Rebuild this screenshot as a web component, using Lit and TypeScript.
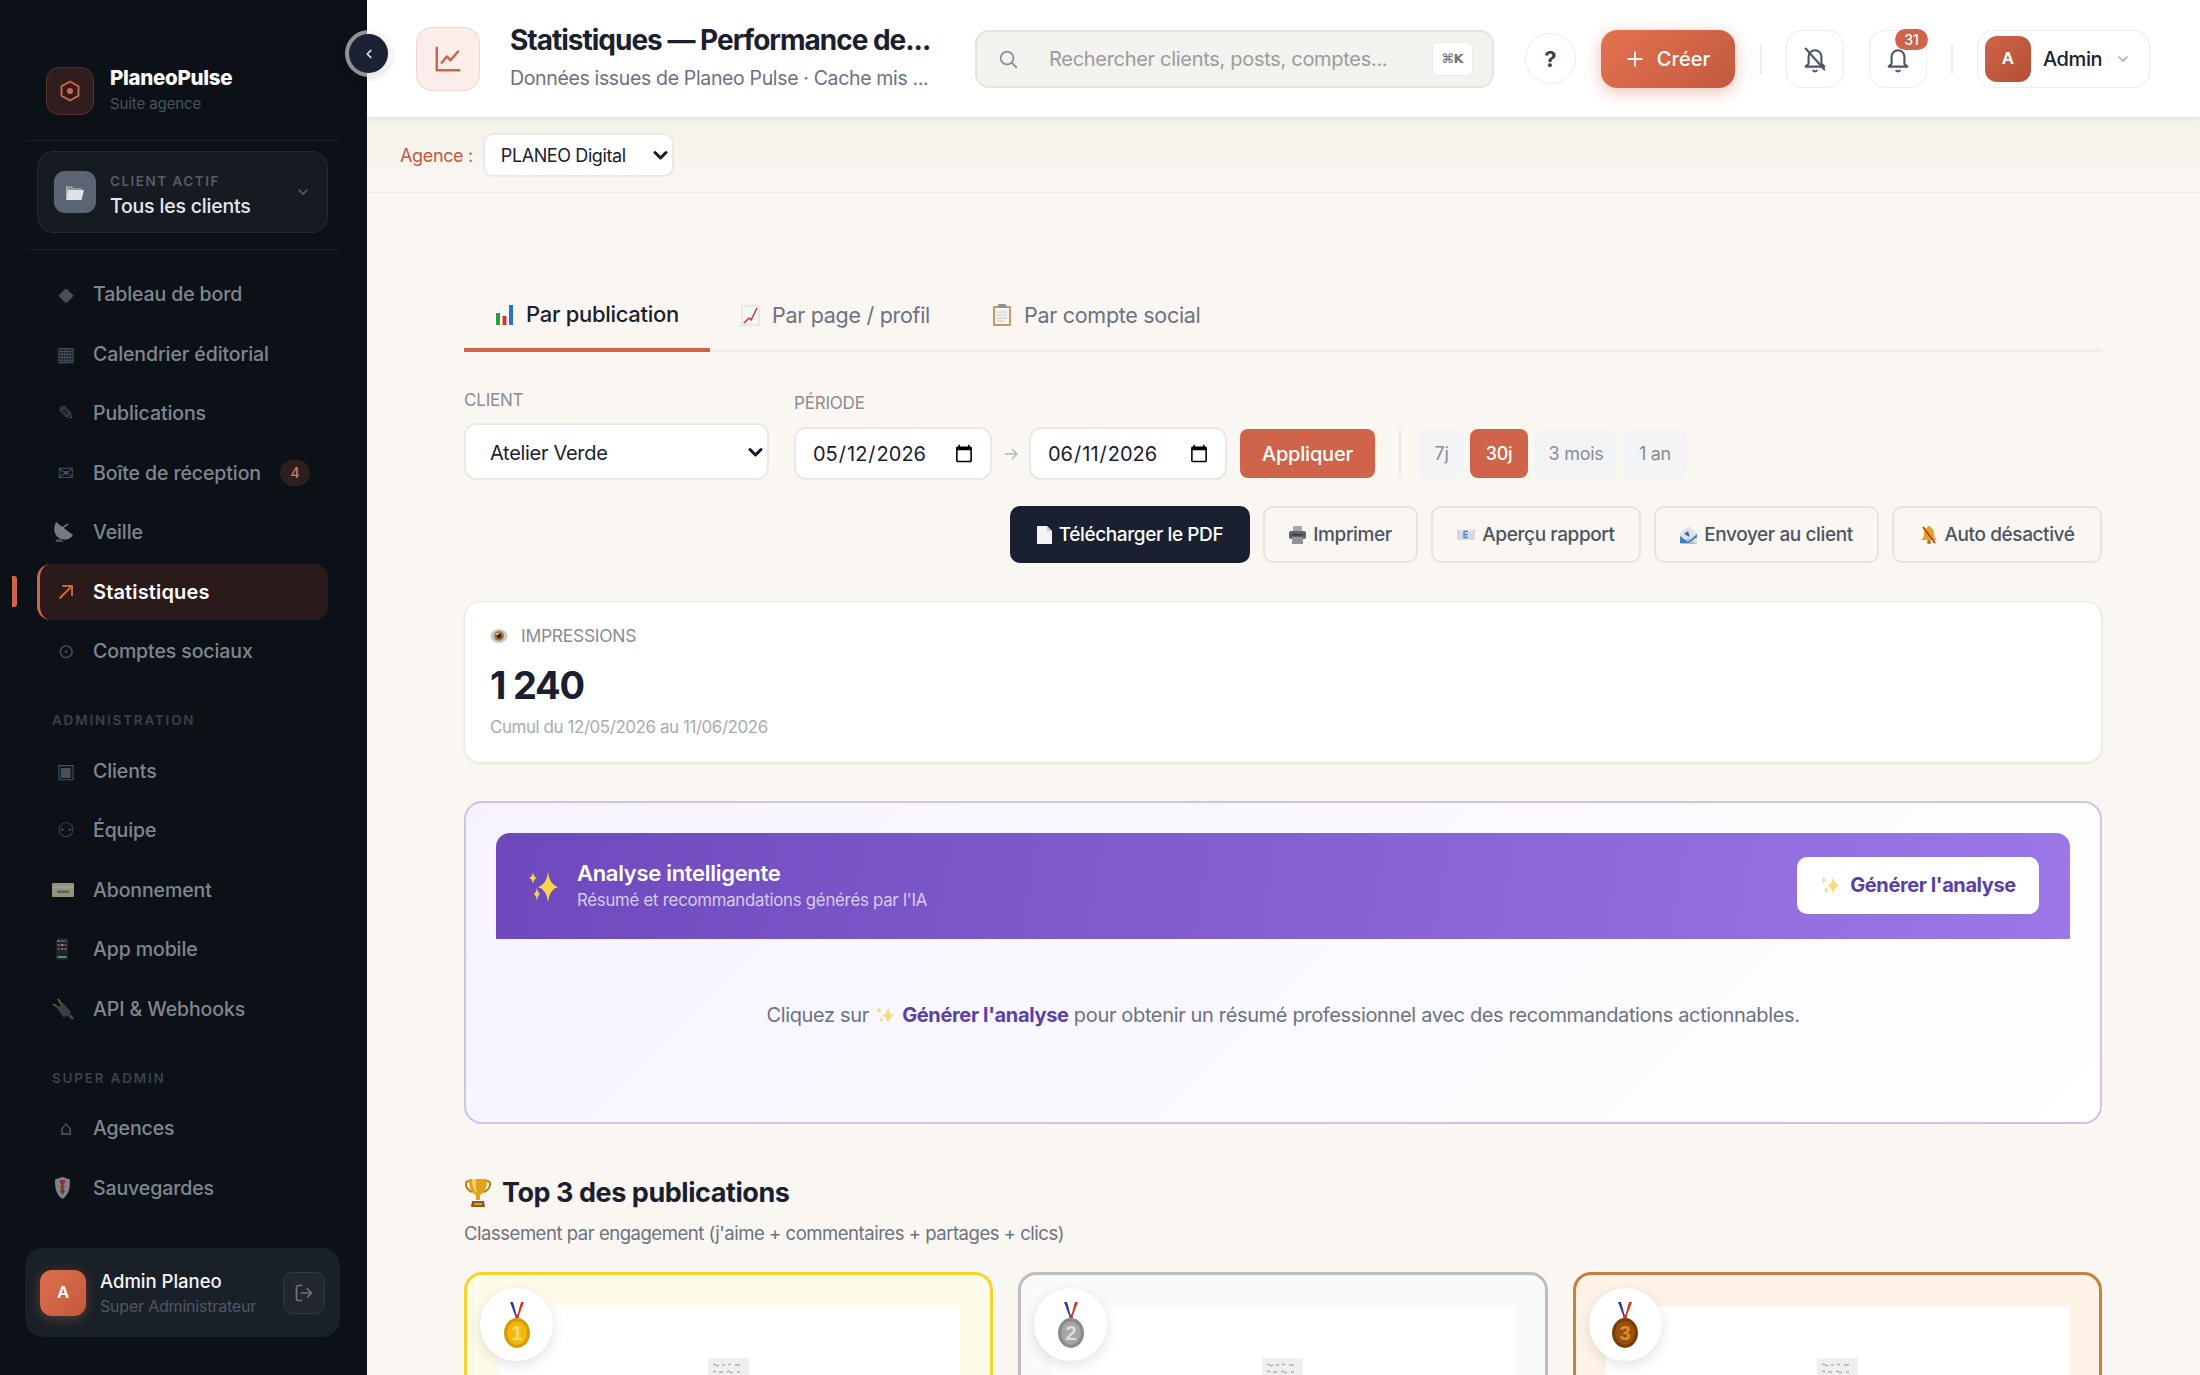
import { LitElement, html, css, svg } from "lit";
import { customElement } from "lit/decorators.js";

const chev = html`<svg width="16" height="16" viewBox="0 0 24 24" fill="none" stroke="currentColor" stroke-width="2" stroke-linecap="round" stroke-linejoin="round"><path d="M6 9l6 6 6-6"/></svg>`;
const selChev = html`<svg class="sc" width="15" height="10" viewBox="0 0 15 10" fill="none" stroke="#111827" stroke-width="3" stroke-linecap="round" stroke-linejoin="round"><path d="M2 2.500l5.500 5.500 5.500-5.500"/></svg>`;
const bellPath = svg`<path d="M6.500 16V10a5.500 5.500 0 0 1 11 0v6l2.500 2.500H4z" /><path d="M10.500 22a2 2 0 0 0 3 0"/>`;

const dish = html`<svg width="22" height="22" viewBox="0 0 22 22"><path d="M4 1l17 13c-3 5-9 6-14 3C2 14 1 7 4 1z" fill="#b4bac2"/><path d="M9 8l7-5" stroke="#d5d9de" stroke-width="1.200"/><path d="M5 18l4 0 3 3H3z" fill="#6b6f75"/></svg>`;
const card = html`<svg width="22" height="22" viewBox="0 0 22 22"><rect x="0" y="4" width="22" height="14" rx="1" fill="#e7e1b8"/><rect x="0" y="7" width="22" height="2.500" fill="#f5f1d4"/><rect x="5" y="11.500" width="12" height="2.500" fill="#8a9a78"/></svg>`;
const phone = html`<svg width="22" height="22" viewBox="0 0 22 22"><rect x="4" y="0" width="12" height="22" rx="2" fill="#2b2f33"/><g><rect x="5.500" y="2" width="2.500" height="2" fill="#e8a04a"/><rect x="9" y="2" width="2.500" height="2" fill="#5fb0e8"/><rect x="12.500" y="2" width="2" height="2" fill="#d85a5a"/><rect x="5.500" y="6" width="2.500" height="2" fill="#62c46a"/><rect x="9" y="6" width="2.500" height="2" fill="#e8d85a"/><rect x="12.500" y="6" width="2" height="2" fill="#b06ad8"/><rect x="5.500" y="10" width="2.500" height="2" fill="#d85a5a"/><rect x="9" y="10" width="2.500" height="2" fill="#5fb0e8"/><rect x="12.500" y="10" width="2" height="2" fill="#e8a04a"/><rect x="5.500" y="18" width="9" height="2" fill="#7fd0c8"/></g></svg>`;
const plug = html`<svg width="22" height="22" viewBox="0 0 22 22"><path d="M1 6l6 4M6 1l4 6" stroke="#b9a94e" stroke-width="1.500"/><path d="M5 10l6-5 8 9-3 4-5 1z" fill="#585b60"/><path d="M17 17l4 4" stroke="#6b6e73" stroke-width="2.500"/></svg>`;
const shield = html`<svg width="22" height="22" viewBox="0 0 22 22"><path d="M3 2.500L10.500 0 18 2.500c0 9-1 15-7.500 19.500C4 17.500 3 11.500 3 2.500z" fill="#c4c8cc"/><path d="M8 3h5v3l-2 2 2 2-2 2 2 2-2.500 4L8 14l1.500-2L8 10l1.500-2L8 6z" fill="#d2493f"/></svg>`;
const folder = html`<svg width="20" height="18" viewBox="0 0 20 18"><path d="M1 3h6l2 2h8v3H1z" fill="#8d96a2"/><path d="M3 7h16l-2.500 10H1z" fill="#dfe3e6"/><path d="M1 3v14l2-10" fill="#b3b9c1"/></svg>`;

const bars = html`<svg width="19" height="21" viewBox="0 0 19 21"><rect x="1" y="9" width="4" height="12" fill="#2f9e44"/><rect x="7.500" y="12" width="4" height="9" fill="#d8352a"/><rect x="14" y="1" width="4" height="20" fill="#2b6fd0"/></svg>`;
const chartUp = html`<svg width="19" height="21" viewBox="0 0 19 21"><rect x="1" y="1" width="17" height="19" fill="#f6f7f9" stroke="#d5d9df"/><path d="M3 18l5-5 2 2 6-12" fill="none" stroke="#d8352a" stroke-width="1.500"/></svg>`;
const clip = html`<svg width="20" height="22" viewBox="0 0 20 22"><rect x="1" y="2" width="18" height="20" rx="1" fill="#c49a62"/><rect x="3" y="4" width="14" height="16" fill="#f3f3f0"/><rect x="6" y="0" width="8" height="4" rx="1" fill="#8d9299"/><path d="M5 8h10M5 11h10M5 14h10M5 17h7" stroke="#c9ccd1" stroke-width="1"/></svg>`;
const page = html`<svg width="15" height="18" viewBox="0 0 15 18"><path d="M0 0h10l5 5v13H0z" fill="#f3f3f3"/><path d="M10 0v5h5z" fill="#c9ccd1"/></svg>`;
const printer = html`<svg width="17" height="18" viewBox="0 0 17 18"><rect x="4" y="0" width="9" height="6" rx="1" fill="#a3a7ad"/><rect x="0" y="5" width="17" height="8" rx="2" fill="#60646b"/><rect x="3" y="11" width="11" height="7" fill="#8f9399"/><rect x="3" y="8" width="11" height="1.500" fill="#35383d"/></svg>`;
const mailE = html`<svg width="18" height="11" viewBox="0 0 18 11"><rect width="18" height="11" fill="#d3dae6"/><path d="M0 0l9 5 9-5" fill="#e7ebf2"/><path d="M11 2.500H7v6h4M7 5.500h3.500" fill="none" stroke="#3f7fd0" stroke-width="1.300"/></svg>`;
const mailIn = html`<svg width="17" height="18" viewBox="0 0 17 18"><path d="M0 7l8.500-7L17 7v11H0z" fill="#dfe3e8"/><path d="M8 5l2 6-6-3" fill="#2b6fb0"/><path d="M0 18l8.500-6 8.500 6z" fill="#b9c0c9"/><path d="M0 10l8 6 9-8v3l-8 6H0z" fill="#3f7fbe"/></svg>`;
const bellX = html`<svg width="18" height="18" viewBox="0 0 18 18"><path d="M9 0a2 2 0 0 1 2 2c3 1 3 4 3 7 0 2 2 4 3 5H1c1-1 3-3 3-5 0-3 0-6 3-7a2 2 0 0 1 2-2z" fill="#e0a526"/><circle cx="9" cy="16" r="2" fill="#a8741a"/><path d="M3 1l12 16" stroke="#d8352a" stroke-width="2"/></svg>`;
const eye = html`<svg width="18" height="16" viewBox="0 0 18 16"><ellipse cx="9" cy="8" rx="8.500" ry="7" fill="#c9cbce"/><circle cx="9" cy="8" r="5" fill="#a77a3a"/><circle cx="9" cy="8" r="2.500" fill="#3a2616"/><circle cx="7.500" cy="6" r="1" fill="#fff"/></svg>`;
const star = (x: number, y: number, rx: number, ry: number) =>
  svg`<path d="M${x} ${y - ry}Q${x + rx * 0.15} ${y - ry * 0.15} ${x + rx} ${y}Q${x + rx * 0.15} ${y + ry * 0.15} ${x} ${y + ry}Q${x - rx * 0.15} ${y + ry * 0.15} ${x - rx} ${y}Q${x - rx * 0.15} ${y - ry * 0.15} ${x} ${y - ry}z"/>`;
const sparkles = (w: number, h: number, fill: string) =>
  html`<svg width="${w}" height="${h}" viewBox="0 0 30 32" fill="${fill}" style="flex:none">${star(20, 17, 10, 15)}${star(5, 8, 4, 6)}${star(9, 24, 3.5, 7)}</svg>`;
const trophy = html`<svg width="28" height="30" viewBox="0 0 28 30"><path d="M5 3C0 3 1 11 8 14" fill="none" stroke="#b97a10" stroke-width="2"/><path d="M23 3c5 0 4 8-3 11" fill="none" stroke="#b97a10" stroke-width="2"/><path d="M5 1h18c0 9-2 14-7 16v5h-4v-5C7 15 5 10 5 1z" fill="#e0a21c"/><path d="M8 1h4c-1 5 0 10 1 14-3-2-5-7-5-14z" fill="#f6d560"/><path d="M8 23h12l1 6H7z" fill="#8a5a20"/><rect x="10" y="25" width="8" height="2" fill="#e0a21c"/></svg>`;
const medal = (n: string, a: string, b: string, t: string) =>
  html`<svg width="32" height="46" viewBox="0 0 32 46"><path d="M9 0l6 16h3L12 0z" fill="#2b3a9e"/><path d="M23 0l-6 16h-3l6-16z" fill="#d8352a"/><path d="M13 0l3 12 3-12" fill="none" stroke="#fff" stroke-width="1.500"/><ellipse cx="16" cy="31" rx="13" ry="15" fill="${a}"/><ellipse cx="16" cy="31" rx="10" ry="11.500" fill="${b}"/><text x="16" y="38" text-anchor="middle" font-family="Liberation Sans, sans-serif" font-weight="700" font-size="20" fill="${t}">${n}</text></svg>`;
const paper = html`<svg width="41" height="60" viewBox="0 0 41 60"><rect width="41" height="60" fill="#efefef"/><g fill="none" stroke="#555" stroke-width=".6"><path d="M5 7q2-2 3 0t3 0M14 7h3M20 7q2-2 3 0M27 7h5M5 14q2-2 3 0M11 14h4M19 14q2-2 3 0t3 0M29 14h3M5 21h4M12 21q2-2 3 0M19 21h5M28 21h3"/></g><circle cx="37" cy="22" r="4" fill="#e0524a"/></svg>`;

type Item = { g?: string; svg?: any; t: string; badge?: string; active?: boolean };
const arrowNE = html`<svg width="16" height="16" viewBox="0 0 16 16" fill="none" stroke="#d0644a" stroke-width="2" stroke-linecap="round" stroke-linejoin="round"><path d="M2 14L14 2M5 2h9v9"/></svg>`;
const main: Item[] = [
  { g: "◆", t: "Tableau de bord" },
  { g: "▦", t: "Calendrier éditorial" },
  { g: "✎", t: "Publications" },
  { g: "✉", t: "Boîte de réception", badge: "4" },
  { svg: dish, t: "Veille" },
  { svg: arrowNE, t: "Statistiques", active: true },
  { g: "⊙", t: "Comptes sociaux" },
];
const admin: Item[] = [
  { g: "▣", t: "Clients" },
  { g: "⚇", t: "Équipe" },
  { svg: card, t: "Abonnement" },
  { svg: phone, t: "App mobile" },
  { svg: plug, t: "API & Webhooks" },
];
const sup: Item[] = [
  { g: "⌂", t: "Agences" },
  { svg: shield, t: "Sauvegardes" },
];

@customElement("app-root")
export class AppRoot extends LitElement {
  static styles = css`
    :host { display: block; width: 100%; height: 100vh; overflow: hidden; font-family: "Inter", "Noto Sans", sans-serif; color: #1a2030; }
    * { box-sizing: border-box; }
    .app { display: flex; height: 100vh; position: relative; }
    .side { width: 367px; flex: none; background: #0c1118; display: flex; flex-direction: column; padding: 0 27px 0 25px; letter-spacing: -0.1px; }
    .brand { display: flex; align-items: center; gap: 16px; height: 141px; padding: 41px 0 0 21px; border-bottom: 1px solid #1b2027; flex: none; }
    .logo { width: 48px; height: 48px; border-radius: 13px; background: #2f1e1d; border: 1px solid #5b2e26; display: flex; align-items: center; justify-content: center; color: #d9674a; }
    .brand b { display: block; font-size: 20.5px; font-weight: 800; color: #fff; letter-spacing: -0.3px; line-height: 24px; }
    .brand small { display: block; font-size: 15px; color: #4a515c; line-height: 24px; margin-top: 2px; }
    .client { margin: 10px 12px 16px; height: 82px; flex: none; border-radius: 16px; background: #161b22; border: 1px solid #262b33; display: flex; align-items: center; padding: 0 16px; gap: 14px; color: #5d6570; }
    .client .ci { width: 42px; height: 42px; border-radius: 11px; background: #5b6472; display: flex; align-items: center; justify-content: center; }
    .client .ct { flex: 1; padding-top: 8px; }
    .client small { display: block; font-size: 13.5px; font-weight: 600; letter-spacing: 1.5px; color: #555c67; line-height: 20px; }
    .client span.n { display: block; font-size: 19.5px; font-weight: 500; color: #e5e7eb; line-height: 30px; letter-spacing: -0.2px; }
    .nav { flex: 1; border-top: 1px solid #1b2027; padding: 16px 12px 0; min-height: 0; }
    .item { position: relative; display: flex; align-items: center; height: 56px; margin-bottom: 3.5px; border-radius: 14px; padding-left: 15px; color: #7f8691; font-size: 19.5px; font-weight: 500; }
    .ic { width: 28px; height: 28px; margin-right: 13px; display: flex; align-items: center; justify-content: center; font-size: 20px; line-height: 28px; color: #474e5a; flex: none; font-family: "DejaVu Sans", sans-serif; }
    .ic.em { justify-content: flex-start; opacity: .62; }
    .item.on { background: #2a1a19; color: #fff; font-weight: 600; border-left: 3px solid #d0644a; padding-left: 12px; font-size: 20px; letter-spacing: 0.15px; }
    .item.on .ic { opacity: 1; justify-content: center; }
    .item.on::before { content: ""; position: absolute; left: -28px; top: 12px; width: 5px; height: 31px; background: #d0644a; border-radius: 0 3px 3px 0; }
    .badge { margin-left: 19px; min-width: 30px; height: 26px; border-radius: 13px; background: #2e1f1d; color: #d9795f; font-size: 14px; display: flex; align-items: center; justify-content: center; }
    .sec { margin: 33px 0 14.500px 15px; height: 16px; line-height: 16px; font-size: 13.5px; font-weight: 600; letter-spacing: 1.8px; color: #3a414c; }
    .foot { flex: none; height: 89px; margin-bottom: 38px; border-radius: 18px; background: #1a2028; display: flex; align-items: center; padding: 0 15px; gap: 14px; }
    .foot .av { width: 46px; height: 46px; border-radius: 12px; background: linear-gradient(135deg, #df6f4e, #c25a3f); color: #fff; font-weight: 800; font-size: 17px; display: flex; align-items: center; justify-content: center; box-shadow: 0 2px 12px rgba(223,111,78,.35); font-family: "Liberation Sans", sans-serif; }
    .foot .ft { flex: 1; }
    .foot b { display: block; font-size: 18.5px; font-weight: 500; color: #f3f4f6; line-height: 26px; letter-spacing: 0; }
    .foot small { display: block; font-size: 16px; color: #4f5661; line-height: 24px; letter-spacing: -0.2px; }
    .out { width: 42px; height: 42px; border-radius: 10px; border: 1px solid #343a43; background: #22272f; color: #6b7280; display: flex; align-items: center; justify-content: center; }

    .toggle { position: absolute; left: 349px; top: 34px; width: 39px; height: 39px; border-radius: 50%; background: #1a2233; color: #e5e7eb; display: flex; align-items: center; justify-content: center; box-shadow: 0 0 0 4px rgba(255,255,255,.55), 0 2px 8px rgba(0,0,0,.35); z-index: 5; }

    .main { flex: 1; min-width: 0; display: flex; flex-direction: column; background: #faf7f2; }
    .top { flex: none; height: 117px; background: #fff; box-shadow: 0 1px 6px rgba(0,0,0,.09); display: flex; align-items: center; padding: 0 50px 0 49px; position: relative; z-index: 2; }
    .pi { width: 64px; height: 64px; flex: none; border-radius: 16px; background: #fbeeea; border: 1px solid #f3d5cd; color: #d0644a; display: flex; align-items: center; justify-content: center; margin-right: 30px; }
    .tt { width: 422px; flex: none; margin-right: 43px; padding-bottom: 3px; }
    .tt h1 { margin: 0; font-size: 28px; font-weight: 700; line-height: 34px; letter-spacing: -1px; white-space: nowrap; }
    .tt p { margin: 8px 0 0; font-size: 19.5px; color: #6b7280; line-height: 26px; letter-spacing: -0.35px; white-space: nowrap; }
    .search { width: 519px; height: 58px; flex: none; border-radius: 14px; background: #f3f2ee; border: 2px solid #e6e4de; display: flex; align-items: center; padding: 0 19px 0 20px; color: #8b8f96; font-size: 20px; letter-spacing: -0.3px; margin-right: 31px; }
    .search span { flex: 1; margin-left: 30px; color: #9a9c9f; }
    .search kbd { width: 41px; height: 34px; border-radius: 6px; background: #fff; border: 1px solid #eceae5; font: 600 13px "DejaVu Sans", sans-serif; color: #6b7280; display: flex; align-items: center; justify-content: center; }
    .help { width: 51px; height: 51px; flex: none; border-radius: 50%; border: 1px solid #ececec; font-size: 22px; font-weight: 700; color: #374151; display: flex; align-items: center; justify-content: center; margin-right: 25px; }
    .create { width: 134px; height: 58px; flex: none; border-radius: 16px; background: linear-gradient(135deg, #e4724f, #c25a3f); box-shadow: 0 4px 16px rgba(208,100,74,.4); color: #fff; font-size: 20px; font-weight: 500; display: flex; align-items: center; justify-content: center; gap: 13px; margin-right: 25px; }
    .vr { width: 2px; height: 30px; background: #eeeeee; flex: none; margin-right: 24px; }
    .ib { position: relative; width: 58px; height: 58px; flex: none; border-radius: 16px; border: 1px solid #ededed; color: #4b5563; display: flex; align-items: center; justify-content: center; margin-right: 25px; }
    .ib.l { margin-right: 24px; }
    .ib i { position: absolute; top: -2px; left: 25px; width: 33px; height: 21px; border-radius: 11px; background: #d0644a; color: #fff; font: 500 14px/21px "Inter", sans-serif; text-align: center; }
    .user { width: 173px; height: 58px; flex: none; border-radius: 16px; border: 1px solid #ededed; display: flex; align-items: center; padding-left: 7px; color: #9ca3af; }
    .user .av { width: 46px; height: 46px; border-radius: 12px; background: linear-gradient(135deg, #d0644a, #b34f35); color: #fff; font: 700 17px "Liberation Sans", sans-serif; display: flex; align-items: center; justify-content: center; margin-right: 12px; }
    .user span { font-size: 20px; font-weight: 500; color: #1a2030; width: 72px; letter-spacing: -0.4px; }

    .ag { flex: none; height: 76px; border-bottom: 1px solid #ece9e3; background: linear-gradient(#f5f2ec, #faf7f2); display: flex; align-items: center; padding: 1px 0 0 33px; gap: 10px; font-size: 18px; color: #c8563c; letter-spacing: -0.35px; }
    .sw { position: relative; display: block; }
    .sc { position: absolute; right: 6px; top: 50%; margin-top: -5px; pointer-events: none; }
    select { appearance: none; display: block; background: #fff; border: 2px solid #ece9e4; font-family: "Inter", sans-serif; color: #1a2030; outline: none; }
    .ag select { width: 191px; height: 44px; border-radius: 10px; font-size: 18px; padding-left: 16px; letter-spacing: -0.4px; }

    .cnt { flex: 1; padding: 95px 98px 0 97px; min-height: 0; overflow: hidden; }
    .tabs { display: flex; height: 64px; border-bottom: 3px solid #f1eeea; }
    .tab { height: 64px; display: flex; align-items: center; padding: 0 31px 10px; gap: 12px; font-size: 21.5px; color: #6b7280; letter-spacing: -0.3px; white-space: nowrap; }
    .tab.on { color: #1a2030; font-weight: 500; font-size: 22px; border-bottom: 4px solid #d0644a; padding: 0 0 8px 31px; width: 246px; }
    .filters { display: flex; align-items: flex-end; margin-top: 37px; }
    .lb { display: block; font-size: 17px; color: #8a8d92; line-height: 22px; letter-spacing: -0.2px; text-transform: uppercase; margin-bottom: 12px; }
    .cl { width: 305px; margin-right: 25px; }
    .cl select { width: 100%; height: 57px; border-radius: 12px; font-size: 20px; padding: 2px 0 0 24px; letter-spacing: -0.3px; }
    .per .lb { margin-bottom: 13px; }
    .pr { display: flex; align-items: center; height: 53px; }
    input[type="date"] { width: 198px; height: 53px; border-radius: 12px; border: 2px solid #ece9e4; background: #fff; font: 400 20px "Inter", sans-serif; padding: 0 16px 0 16px; color: #1a2030; outline: none; }
    input[type="date"]::-webkit-calendar-picker-indicator { width: 20px; height: 20px; padding: 0; margin: 0; }
    .ar { width: 37px; text-align: center; color: #b5b8be; display: flex; justify-content: center; }
    .apply { height: 49px; width: 135px; border-radius: 8px; background: #d0644a; color: #fff; font-size: 20px; font-weight: 500; display: flex; align-items: center; justify-content: center; margin-left: 13px; letter-spacing: -0.2px; }
    .sep { width: 2px; height: 49px; background: #ece9e3; margin: 0 18px 0 24px; }
    .chip { height: 49px; border-radius: 8px; background: #f3f4f6; color: #888c93; font-size: 18px; display: flex; align-items: center; justify-content: center; margin-right: 6px; letter-spacing: -0.3px; }
    .chip.on { background: #d0644a; color: #fff; font-weight: 500; }
    .c1 { width: 45px; } .c2 { width: 58px; } .c3 { width: 84px; } .c4 { width: 62px; }
    .acts { display: flex; justify-content: flex-end; gap: 13px; margin-top: 26px; }
    .btn { height: 57px; border-radius: 10px; border: 2px solid #e8e4dc; color: #4b5563; font-size: 19px; font-weight: 500; display: flex; align-items: center; justify-content: center; gap: 7px; letter-spacing: -0.4px; }
    .btn.dk { background: #1a2030; color: #fff; border-color: #1a2030; }
    .w1 { width: 240px; } .w2 { width: 155px; } .w3 { width: 210px; } .w4 { width: 225px; } .w5 { width: 210px; }
    .stat { margin-top: 38px; height: 162px; background: #fff; border: 1px solid #ece9e3; border-radius: 16px; box-shadow: 0 1px 3px rgba(0,0,0,.07); padding: 23px 25px 0; }
    .stat .l { display: flex; align-items: center; gap: 13px; font-size: 17.5px; color: #8a8d92; line-height: 22px; letter-spacing: -0.3px; }
    .stat .v { font-size: 38px; font-weight: 700; line-height: 46px; margin-top: 15px; letter-spacing: -1.2px; }
    .stat .s { font-size: 17px; color: #a8abb0; line-height: 22px; margin-top: 8px; letter-spacing: -0.45px; }
    .ai { margin-top: 38px; height: 323px; border: 2px solid #cfc3ea; border-radius: 18px; background: linear-gradient(135deg, #f6f3fe, #ffffff); padding: 30px; }
    .ah { height: 106px; border-radius: 14px 14px 0 0; background: linear-gradient(100deg, #6d49bd, #9b77e8); display: flex; align-items: center; padding: 0 31px 0 32px; color: #fff; }
    .ah .sp { margin-right: 19px; display: flex; }
    .ah .x { flex: 1; }
    .ah b { display: block; font-size: 22px; font-weight: 600; line-height: 27px; letter-spacing: -0.3px; }
    .ah small { display: block; font-size: 16.8px; line-height: 24px; margin-top: 1px; color: rgba(255,255,255,.72); letter-spacing: -0.25px; }
    .gen { width: 242px; height: 57px; margin-bottom: 2px; border-radius: 10px; background: #fff; color: #5b3ea8; font-size: 20px; font-weight: 700; display: flex; align-items: center; justify-content: center; gap: 10px; letter-spacing: -0.4px; }
    .ap { margin: 61px 0 0; text-align: center; font-size: 20px; color: #6b7280; line-height: 30px; letter-spacing: -0.35px; }
    .ap b { color: #5b3ea8; font-weight: 700; }
    .ap svg { vertical-align: -3px; margin: 0 8px 0 2px; }
    .th { margin: 47px 0 0; display: flex; align-items: center; gap: 10px; font-size: 27px; font-weight: 700; line-height: 44px; letter-spacing: -0.45px; }
    .ts { margin: 5px 0 0; font-size: 18.5px; color: #6b7280; line-height: 26px; letter-spacing: -0.47px; }
    .cards { display: grid; grid-template-columns: repeat(3, 1fr); gap: 25px; margin-top: 26px; }
    .card { position: relative; height: 400px; border: 3px solid; border-radius: 18px; padding: 31px 30px 0; }
    .card.g { border-color: #f6d32d; background: #fefbe9; }
    .card.s { border-color: #bdbdbd; background: #f9fafb; }
    .card.b { border-color: #c97f3f; background: #fef3e6; }
    .med { position: absolute; left: 13px; top: 13px; width: 73px; height: 73px; border-radius: 50%; background: #fff; box-shadow: 0 4px 14px rgba(0,0,0,.12); display: flex; align-items: center; justify-content: center; z-index: 1; }
    .pic { background: #fff; height: 360px; display: flex; justify-content: center; align-items: flex-start; padding-top: 52px; }
  `;

  private item(i: Item) {
    return html`<div class="item ${i.active ? "on" : ""}">
      <span class="ic ${i.svg ? "em" : ""}">${i.svg ?? i.g}</span>${i.t}
      ${i.badge ? html`<span class="badge">${i.badge}</span>` : ""}
    </div>`;
  }

  render() {
    return html`<div class="app">
      <aside class="side">
        <div class="brand">
          <div class="logo"><svg width="24" height="24" viewBox="0 0 24 24" fill="none" stroke="currentColor" stroke-width="1.8" stroke-linejoin="round"><path d="M12 2.500l8.500 4.800v9.400L12 21.500l-8.500-4.800V7.300z"/><circle cx="12" cy="12" r="3" fill="currentColor" stroke="none"/></svg></div>
          <div><b>PlaneoPulse</b><small>Suite agence</small></div>
        </div>
        <div class="client">
          <div class="ci">${folder}</div>
          <div class="ct"><small>CLIENT ACTIF</small><span class="n">Tous les clients</span></div>
          ${chev}
        </div>
        <nav class="nav">
          ${main.map((i) => this.item(i))}
          <div class="sec">ADMINISTRATION</div>
          ${admin.map((i) => this.item(i))}
          <div class="sec">SUPER ADMIN</div>
          ${sup.map((i) => this.item(i))}
        </nav>
        <div class="foot">
          <div class="av">A</div>
          <div class="ft"><b>Admin Planeo</b><small>Super Administrateur</small></div>
          <div class="out"><svg width="20" height="20" viewBox="0 0 24 24" fill="none" stroke="currentColor" stroke-width="2" stroke-linecap="round" stroke-linejoin="round"><path d="M9 21H5a2 2 0 0 1-2-2V5a2 2 0 0 1 2-2h4M16 17l5-5-5-5M21 12H9"/></svg></div>
        </div>
      </aside>
      <div class="toggle"><svg width="14" height="14" viewBox="0 0 24 24" fill="none" stroke="currentColor" stroke-width="3" stroke-linecap="round" stroke-linejoin="round"><path d="M15 6l-6 6 6 6"/></svg></div>
      <div class="main">
        <header class="top">
          <div class="pi"><svg width="30" height="30" viewBox="0 0 24 24" fill="none" stroke="currentColor" stroke-width="2" stroke-linecap="round" stroke-linejoin="round"><path d="M3 3v18h18"/><path d="M7 15l4-5 3 3 6-7"/></svg></div>
          <div class="tt"><h1>Statistiques — Performance de...</h1><p>Données issues de Planeo Pulse · Cache mis ...</p></div>
          <div class="search"><svg width="22" height="22" viewBox="0 0 24 24" fill="none" stroke="currentColor" stroke-width="2" stroke-linecap="round"><circle cx="11" cy="11" r="7"/><path d="M21 21l-4.500-4.500"/></svg><span>Rechercher clients, posts, comptes...</span><kbd>⌘K</kbd></div>
          <div class="help">?</div>
          <div class="create"><svg width="18" height="18" viewBox="0 0 24 24" fill="none" stroke="currentColor" stroke-width="2.400" stroke-linecap="round"><path d="M12 3v18M3 12h18"/></svg>Créer</div>
          <div class="vr"></div>
          <div class="ib"><svg width="28" height="28" viewBox="0 0 24 24" fill="none" stroke="currentColor" stroke-width="1.800" stroke-linecap="round" stroke-linejoin="round">${bellPath}<path d="M4 3l16 18"/></svg></div>
          <div class="ib l"><svg width="28" height="28" viewBox="0 0 24 24" fill="none" stroke="currentColor" stroke-width="1.800" stroke-linecap="round" stroke-linejoin="round">${bellPath}</svg><i>31</i></div>
          <div class="vr"></div>
          <div class="user"><div class="av">A</div><span>Admin</span>${chev}</div>
        </header>
        <div class="ag">Agence :<span class="sw"><select><option>PLANEO Digital</option></select>${selChev}</span></div>
        <div class="cnt">
          <div class="tabs">
            <div class="tab on">${bars}Par publication</div>
            <div class="tab">${chartUp}Par page / profil</div>
            <div class="tab">${clip}Par compte social</div>
          </div>
          <div class="filters">
            <div class="cl"><span class="lb">Client</span><span class="sw"><select><option>Atelier Verde</option></select>${selChev}</span></div>
            <div class="per"><span class="lb">Période</span>
              <div class="pr">
                <input type="date" value="2026-05-12" />
                <span class="ar"><svg width="18" height="18" viewBox="0 0 24 24" fill="none" stroke="currentColor" stroke-width="2" stroke-linecap="round" stroke-linejoin="round"><path d="M4 12h16M14 6l6 6-6 6"/></svg></span>
                <input type="date" value="2026-06-11" />
                <div class="apply">Appliquer</div>
                <div class="sep"></div>
                <div class="chip c1">7j</div>
                <div class="chip on c2">30j</div>
                <div class="chip c3">3 mois</div>
                <div class="chip c4">1 an</div>
              </div>
            </div>
          </div>
          <div class="acts">
            <div class="btn dk w1">${page}Télécharger le PDF</div>
            <div class="btn w2">${printer}Imprimer</div>
            <div class="btn w3">${mailE}Aperçu rapport</div>
            <div class="btn w4">${mailIn}Envoyer au client</div>
            <div class="btn w5">${bellX}Auto désactivé</div>
          </div>
          <div class="stat">
            <div class="l">${eye}IMPRESSIONS</div>
            <div class="v">1 240</div>
            <div class="s">Cumul du 12/05/2026 au 11/06/2026</div>
          </div>
          <div class="ai">
            <div class="ah"><span class="sp">${sparkles(30, 32, "#f8d54a")}</span><div class="x"><b>Analyse intelligente</b><small>Résumé et recommandations générés par l'IA</small></div><div class="gen">${sparkles(20, 20, "#f5dc7c")}Générer l'analyse</div></div>
            <p class="ap">Cliquez sur ${sparkles(18, 20, "#f5dc7c")}<b>Générer l'analyse</b> pour obtenir un résumé professionnel avec des recommandations actionnables.</p>
          </div>
          <h2 class="th">${trophy}Top 3 des publications</h2>
          <p class="ts">Classement par engagement (j'aime + commentaires + partages + clics)</p>
          <div class="cards">
            <div class="card g"><div class="med">${medal("1", "#d99a08", "#f0b90f", "#f8da6a")}</div><div class="pic">${paper}</div></div>
            <div class="card s"><div class="med">${medal("2", "#8a8a8a", "#a5a5a5", "#dedede")}</div><div class="pic">${paper}</div></div>
            <div class="card b"><div class="med">${medal("3", "#7a3d08", "#97500f", "#e8892a")}</div><div class="pic">${paper}</div></div>
          </div>
        </div>
      </div>
    </div>`;
  }
}
